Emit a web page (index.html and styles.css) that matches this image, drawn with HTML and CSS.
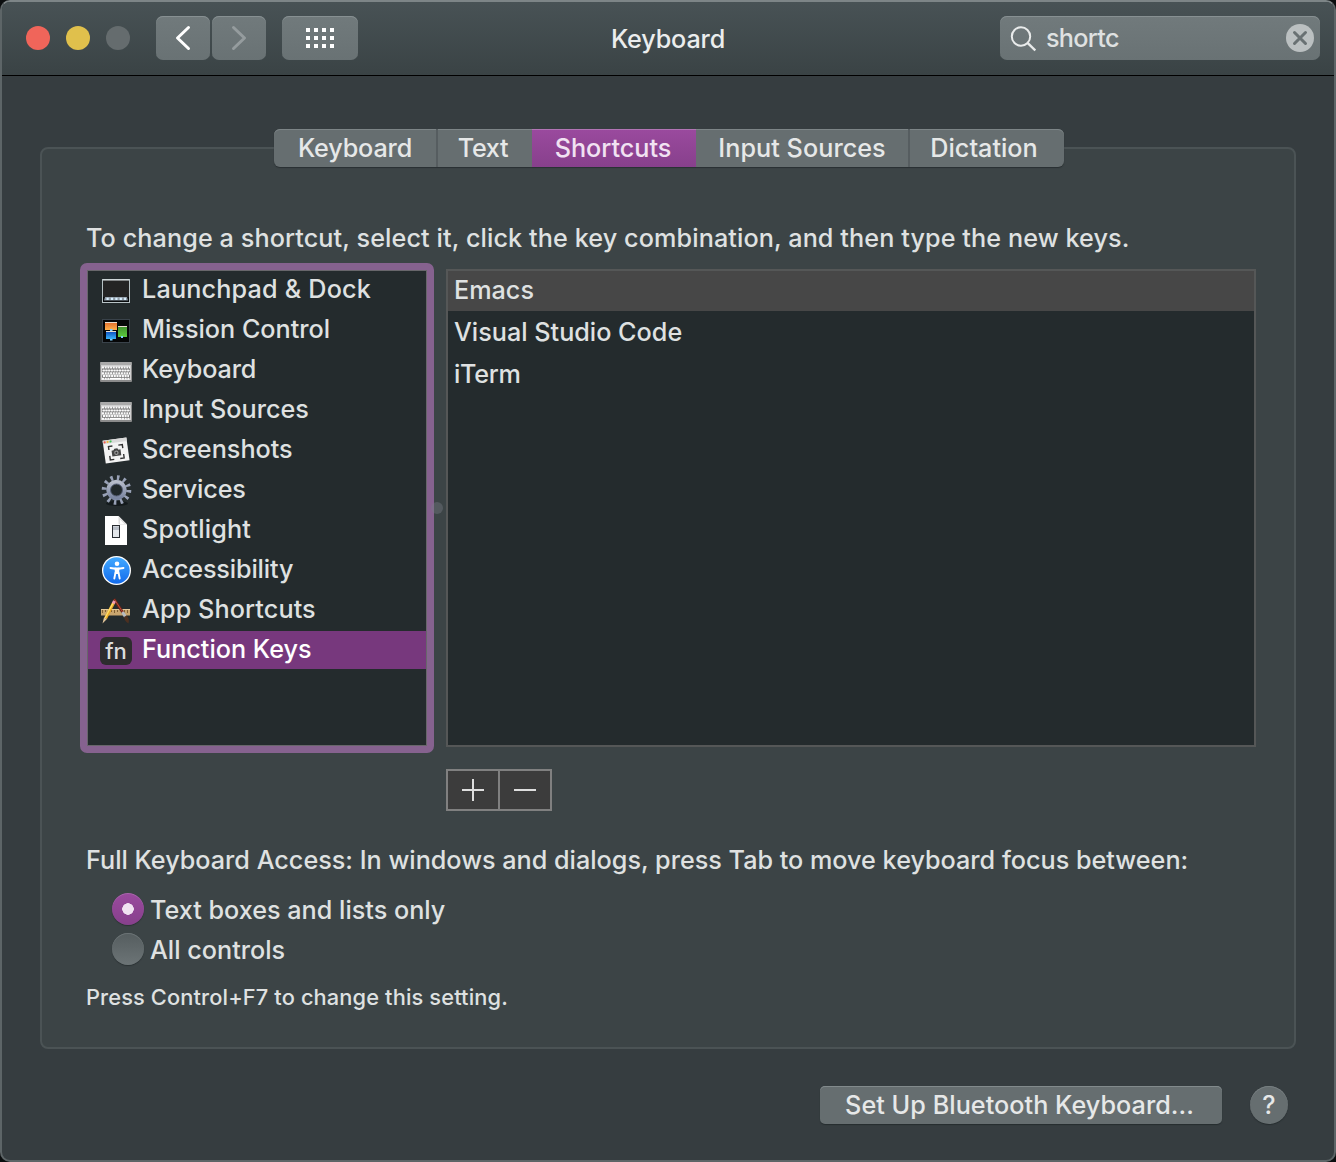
FILE: index.html
```html
<!DOCTYPE html>
<html lang="en">
<head>
<meta charset="utf-8">
<title>Keyboard</title>
<link rel="stylesheet" href="styles.css">
</head>
<body>
<div class="window">
  <header class="titlebar">
    <div class="lights"><span class="light close"></span><span class="light minimize"></span><span class="light zoom"></span></div>
    <div class="nav">
      <button class="tool" aria-label="Back"><svg width="54" height="44" viewBox="0 0 54 44"><path d="M32.500 11.500L21.500 22L32.500 32.500" fill="none" stroke="#fff" stroke-width="3" stroke-linecap="round" stroke-linejoin="round"/></svg></button>
      <button class="tool" aria-label="Forward"><svg width="54" height="44" viewBox="0 0 54 44"><path d="M21.500 11.500L32.500 22L21.500 32.500" fill="none" stroke="#959c9e" stroke-width="3" stroke-linecap="round" stroke-linejoin="round"/></svg></button>
    </div>
    <button class="tool grid" aria-label="Show all"><svg width="76" height="44" viewBox="0 0 76 44" fill="none" stroke="#fff" stroke-width="4" stroke-dasharray="4 4"><path d="M24 14H52M24 22H52M24 30H52"/></svg></button>
    <h1 class="title">Keyboard</h1>
    <div class="search">
      <svg class="glass" width="26" height="28" viewBox="0 0 26 28" fill="none" stroke="#e9ebeb" stroke-width="2"><circle cx="11" cy="12.500" r="9.200"/><path d="M17.800 19.200L25.300 26.500" stroke-width="2.400"/></svg>
      <span class="query">shortc</span>
      <svg class="clear" width="28" height="28" viewBox="0 0 28 28"><circle cx="14" cy="14" r="14" fill="#bbc0c1"/><path d="M8.500 8.500L19.500 19.500M19.500 8.500L8.500 19.500" stroke="#697173" stroke-width="3" stroke-linecap="round"/></svg>
    </div>
  </header>
  <main class="content">
    <nav class="tabs">
      <a class="tab tab-keyboard">Keyboard</a><a class="tab tab-text">Text</a><a class="tab tab-shortcuts">Shortcuts</a><a class="tab tab-input">Input Sources</a><a class="tab tab-dictation">Dictation</a>
    </nav>
    <section class="panel">
      <p class="intro">To change a shortcut, select it, click the key combination, and then type the new keys.</p>
      <div class="lists">
        <ul class="categories">
          <li class="launchpad"><svg class="icon" viewBox="0 0 32 32"><rect x="2.500" y="4.500" width="27" height="23" fill="#242424" stroke="#b7c2c5"/><path d="M3 5H29" stroke="#e2e8e9"/><path d="M3 22H29V27H3Z" fill="#07090b"/><path d="M5 22H27L28 25.500H4Z" fill="#929da8"/><path d="M6.500 23.800H26" stroke="#d9f0ff" stroke-width="2.200" stroke-dasharray="2.200 2.200"/></svg>Launchpad &amp; Dock</li>
          <li><svg class="icon" viewBox="0 0 32 32"><defs><linearGradient id="o" x2="0" y2="1"><stop stop-color="#e06a2a"/><stop offset="1" stop-color="#ffb14d"/></linearGradient><linearGradient id="b" x2="0" y2="1"><stop stop-color="#0b46b8"/><stop offset="1" stop-color="#39b4fb"/></linearGradient><linearGradient id="g" x2="0" y2="1"><stop stop-color="#3f8f2e"/><stop offset="1" stop-color="#5dcb3e"/></linearGradient></defs><rect x="2.500" y="4.500" width="27" height="23" fill="#050607" stroke="#39424a"/><rect x="5" y="7" width="12" height="8" fill="url(#o)"/><rect x="6" y="16" width="10" height="8" fill="url(#b)"/><rect x="18" y="11" width="9" height="11" fill="url(#g)"/><path d="M5 7.500H17M6 16.500H16M18 11.500H27" stroke="#e8ddcf"/><path d="M10 14h2.500v2H10zM10 24h2.500v1.500H10zM21 21h2v2h-2z" fill="#7fd1ff"/></svg>Mission Control</li>
          <li class="keyboard"><svg class="icon" viewBox="0 0 32 32"><rect y="7" width="32" height="20" rx="1" fill="#8b8b8b"/><path d="M.5 7h31v3H.5z" fill="#aaa"/><rect x="1" y="10" width="30" height="15" fill="#cfcfcf"/><g stroke="#777" stroke-width="4"><path d="M2 13.500H30" stroke-width="3"/><path d="M2 17.500H30M2 22H30" stroke-width="3.400"/></g><g stroke="#fafafa" stroke-width="1.900" stroke-dasharray="2 .7"><path d="M2 12.500H30M2.800 15.500H30M2 18.300H30M3 21H29M2 23.700H9.500M22 23.700H30"/></g><path d="M10 23.700H21.500" stroke="#fff" stroke-width="1.800"/></svg>Keyboard</li>
          <li><svg class="icon" viewBox="0 0 32 32"><rect y="7" width="32" height="20" rx="1" fill="#8b8b8b"/><path d="M.5 7h31v3H.5z" fill="#aaa"/><rect x="1" y="10" width="30" height="15" fill="#cfcfcf"/><g stroke="#777" stroke-width="4"><path d="M2 13.500H30" stroke-width="3"/><path d="M2 17.500H30M2 22H30" stroke-width="3.400"/></g><g stroke="#fafafa" stroke-width="1.900" stroke-dasharray="2 .7"><path d="M2 12.500H30M2.800 15.500H30M2 18.300H30M3 21H29M2 23.700H9.500M22 23.700H30"/></g><path d="M10 23.700H21.500" stroke="#fff" stroke-width="1.800"/></svg>Input Sources</li>
          <li><svg class="icon" viewBox="0 0 32 32"><g transform="translate(0 -1) rotate(-8 16 16)"><rect x="4" y="5" width="24" height="23" fill="#f3f3f3"/><path d="M4 5H28V8.500H4Z" fill="#d9d9d9"/><circle cx="5.800" cy="6.800" r="1.100" fill="#ef5b51"/><circle cx="8.800" cy="6.800" r="1.100" fill="#efb63e"/><circle cx="11.800" cy="6.800" r="1.100" fill="#43c157"/><path d="M9 15V11.500H13M19 11.500H23V15M23 21V25H19M13 25H9V21" fill="none" stroke="#333" stroke-width="1.400"/><path d="M11.500 16h2l1-1.500h3l1 1.500h2v6h-9z" fill="#444"/><circle cx="16" cy="18.800" r="2.200" fill="#999"/><circle cx="16" cy="18.800" r="1" fill="#333"/></g></svg>Screenshots</li>
          <li class="services"><svg class="icon" viewBox="0 0 32 32"><defs><linearGradient id="s" x2="0" y2="1"><stop stop-color="#b6bccb"/><stop offset="1" stop-color="#7984a0"/></linearGradient></defs><ellipse cx="17" cy="28.500" rx="11" ry="2.500" fill="#141a1c"/><g fill="none" stroke="#98a1b6"><circle cx="16.500" cy="15" r="8" stroke="url(#s)" stroke-width="4.500"/><circle cx="16.500" cy="15" r="12.300" stroke-width="5" stroke-dasharray="2.500 3.945"/></g><circle cx="16.500" cy="15" r="6" fill="#20282b" stroke="#59627a"/></svg>Services</li>
          <li class="spotlight"><svg class="icon" viewBox="0 0 32 32"><path d="M5 1H18.500L27 9.500V30H5Z" fill="#fff"/><path d="M18.500 1L27 9.500H19.500Q18.500 9.500 18.500 8Z" fill="#ddd"/><path d="M20 4.500L24.500 9H20Z" fill="#fff"/><rect x="12.500" y="10.500" width="7" height="12" fill="#e5e8ec" stroke="#292d32"/><path d="M13 11.500H19V15H13Z" fill="#b8bec7"/></svg>Spotlight</li>
          <li class="accessibility"><svg class="icon" viewBox="0 0 32 32"><defs><linearGradient id="a" x2="0" y2="1"><stop stop-color="#42a9ff"/><stop offset="1" stop-color="#126bec"/></linearGradient></defs><circle cx="16.500" cy="15.500" r="14.500" fill="#fff"/><circle cx="16.500" cy="15.500" r="13.200" fill="url(#a)"/><circle cx="17" cy="8.800" r="2.300" fill="#fff"/><path d="M10.500 13L15.500 13.700M23.500 13L18.500 13.700M15.500 17.500L14.300 23.500M18.500 17.500L19.700 23.500" stroke="#fff" stroke-width="1.900" stroke-linecap="round"/><path d="M14.500 12.500H19.500L19 19H15Z" fill="#fff"/></svg>Accessibility</li>
          <li class="app-shortcuts"><svg class="icon" viewBox="0 0 32 32"><rect x="1" y="14" width="29" height="6.500" fill="#c9a66f"/><path d="M1 14.500H30" stroke="#e4c898"/><path d="M2.500 15v3M5.500 15v2M8.500 15v3M11.500 15v2M14.500 15v3M17.500 15v2M21.500 15v3M24.500 15v2M27.500 15v3" stroke="#806034"/><path d="M14 4L23.500 18.500" stroke="#68241b" stroke-width="2.800"/><path d="M14.500 4.500L23 17.500" stroke="#c04e38"/><path d="M22.500 17L25.500 22" stroke="#b9bdc0" stroke-width="3"/><path d="M24 22L26.500 20.500Q30 24 28.500 28.500Q24.500 26 24 22Z" fill="#4d3020"/><path d="M13.500 8L5.500 23.500" stroke="#eba929" stroke-width="3"/><path d="M13 8L5 23" stroke="#ffe06c" stroke-width="1.300"/><path d="M14.500 6L13.200 8.500" stroke="#f29bb0" stroke-width="3"/><path d="M4 22.500L6.900 24L2.500 28.500Z" fill="#e4c79b"/></svg>App Shortcuts</li>
          <li class="selected"><span class="icon fn">fn</span>Function Keys</li>
        </ul>
        <div class="splitter"></div>
        <ul class="apps"><li class="selected">Emacs</li><li>Visual Studio Code</li><li class="iterm">iTerm</li></ul>
      </div>
      <div class="edit"><button aria-label="Add"><svg width="22" height="22"><path d="M0 11H22M11 0V22" stroke="#dedede" stroke-width="2"/></svg></button><button aria-label="Remove"><svg width="22" height="22"><path d="M0 11H22" stroke="#dedede" stroke-width="2"/></svg></button></div>
      <p class="access">Full Keyboard Access: In windows and dialogs, press Tab to move keyboard focus between:</p>
      <div class="radios">
        <label><span class="radio on"></span>Text boxes and lists only</label>
        <label><span class="radio"></span>All controls</label>
      </div>
      <p class="hint">Press Control+F7 to change this setting.</p>
    </section>
    <footer class="footer"><button class="bluetooth">Set Up Bluetooth Keyboard...</button><button class="help">?</button></footer>
  </main>
</div>
</body>
</html>
```
FILE: styles.css
```css
* { box-sizing: border-box; }
body { margin: 0; background: #0b0e0f; color: #dfe1e1; font: 450 25.2px/32px Inter, "Liberation Sans", sans-serif; white-space: nowrap; }
h1, p, ul { margin: 0; padding: 0; font-size: inherit; font-weight: inherit; }
ul { list-style: none; }
button { padding: 0; border: 0; color: inherit; font: inherit; display: flex; align-items: center; justify-content: center; }
svg { display: block; flex: none; }

/* Window frame and title bar */
.window { width: 1336px; height: 1162px; border: 2px solid #5d6567; border-top-color: #7d8587; border-radius: 10px; background: #363d40; overflow: hidden; display: flex; flex-direction: column; }
.titlebar { height: 74px; flex: none; padding: 14px 14px 0 24px; display: flex; align-items: flex-start; background: linear-gradient(#485255, #3a4345); border-bottom: 1px solid #000; }
.lights { display: flex; gap: 16px; padding-top: 10px; margin-right: 26px; }
.light { width: 24px; height: 24px; border-radius: 50%; }
.close { background: #f0655a; }
.minimize { background: #e0c04c; }
.zoom { background: #656c6e; }
.nav { display: flex; gap: 2px; margin-right: 16px; }
.tool { width: 54px; height: 44px; border-radius: 7px; background: linear-gradient(#717a7c, #697274); box-shadow: inset 0 1px #879092; }
.grid { width: 76px; }
.title { flex: 1; text-align: center; line-height: 46px; letter-spacing: -.15px; color: #ebeded; padding-right: 22px; }
.search { width: 320px; height: 44px; padding: 0 6px 0 10px; border-radius: 7px; display: flex; align-items: center; background: linear-gradient(#717a7c, #697274); box-shadow: inset 0 1px #879092; }
.query { flex: 1; padding-left: 10px; letter-spacing: -.7px; }

/* Tabs */
.content { flex: 1; padding: 53px 38px 0; display: flex; flex-direction: column; }
.tabs { position: relative; align-self: center; height: 38px; width: 790px; margin-left: 2px; display: flex; border-radius: 6px; overflow: hidden; background: #666e70; box-shadow: inset 0 1px #7d8587, 0 1px 1px #293032; line-height: 38px; color: #e6e8e8; }
.tab { display: flex; justify-content: center; }
.tab-keyboard { width: 164px; border-right: 2px solid #565d60; letter-spacing: -.15px; }
.tab-text { width: 94px; padding-right: 4px; letter-spacing: -.3px; }
.tab-shortcuts { width: 164px; padding-right: 2px; color: #f1e2f2; background: linear-gradient(#9a4a9e, #87408c); box-shadow: inset 0 1px #b274b5; }
.tab-input { width: 214px; border-right: 2px solid #565d60; letter-spacing: .05px; }
.tab-dictation { width: 154px; padding-right: 6px; }

/* Shortcuts pane */
.panel { height: 902px; margin-top: -20px; padding: 73px 38px 0; border: 2px solid #4b5355; border-radius: 8px; background: #3c4446; }
.intro, .access, .hint { padding-left: 6px; }
.intro { letter-spacing: .095px; }
.lists { display: flex; margin-top: 9px; height: 490px; }
.categories { width: 354px; padding: 0; border: 7px solid #86628f; border-radius: 7px; background: #242b2d; outline: 1px solid #68666b; outline-offset: -8px; }
.categories li { height: 38px; margin: 1px 1px 2px; padding-left: 12px; display: flex; line-height: 37px; }
.categories li + li { margin-top: 0; }
.categories .selected { background: #77387d; color: #fff; }
.launchpad { letter-spacing: .18px; }
.keyboard, .services, .accessibility { letter-spacing: -.15px; }
.spotlight { letter-spacing: .15px; }
.app-shortcuts { letter-spacing: .1px; }
.icon { width: 32px; height: 32px; margin: 4px 10px 0 0; flex: none; }
.fn { height: 28px; margin-top: 6px; border-radius: 6px; background: #2d2c2e; color: #ddd; font-size: 22px; line-height: 28px; text-align: center; }
.splitter { width: 12px; height: 12px; margin: 239px 3px 0 -3px; border-radius: 50%; background: rgba(120, 126, 132, .4); }
.apps { width: 810px; height: 478px; margin-top: 6px; border: 2px solid #555757; background: #242b2d; }
.apps li { height: 40px; margin-bottom: 2px; padding-left: 6px; line-height: 38px; }
.apps .selected { background: #474747; }
.iterm { letter-spacing: -.3px; }
.edit { display: flex; width: 106px; height: 42px; margin: 16px 0 33px 366px; padding: 2px; gap: 2px; background: #808080; }
.edit button { flex: 1; background: #3c3c3c; }
.radios { display: flex; flex-direction: column; gap: 8px; padding: 17px 0 16px 32px; }
.radios label { display: flex; gap: 6px; height: 32px; line-height: 34px; }
.radio { width: 32px; height: 32px; border-radius: 50%; background: linear-gradient(#555d5f, #6c7476); box-shadow: 0 1px 1px #2b3234, inset 0 1px #6b7375; }
.radio.on { background: radial-gradient(circle, #f1e2f2 5.500px, transparent 6px), linear-gradient(#9a4a9e, #87408c); box-shadow: 0 1px 1px #2b3234, inset 0 1px #aa67ad; }
.hint { font-size: 21.800px; letter-spacing: .13px; }

/* Footer */
.footer { display: flex; justify-content: flex-end; gap: 28px; padding: 37px 8px 0 0; color: #e6e8e8; }
.bluetooth { width: 402px; height: 38px; padding-right: 3px; border-radius: 5px; background: #666e70; box-shadow: inset 0 1px #828a8c, 0 1px 1px #262d2f; letter-spacing: .04px; }
.help { width: 38px; height: 38px; border-radius: 50%; background: #666e70; box-shadow: inset 0 1px #777f81, 0 1px 1px #262d2f; }
```
